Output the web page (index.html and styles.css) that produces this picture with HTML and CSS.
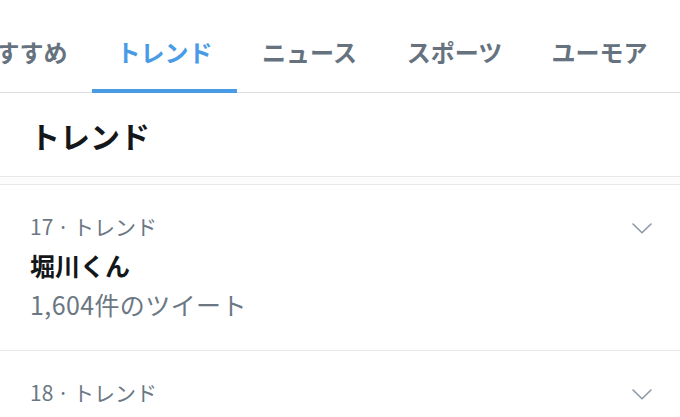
FILE: index.html
```html
<!DOCTYPE html>
<html lang="ja">
<head>
<meta charset="utf-8">
<link rel="stylesheet" href="styles.css">
</head>
<body>
<div class="page">
  <nav class="tabs">
    <div class="tab">おすすめ</div>
    <div class="tab active">トレンド</div>
    <div class="tab">ニュース</div>
    <div class="tab">スポーツ</div>
    <div class="tab">ユーモア</div>
  </nav>
  <h1 class="heading">トレンド</h1>
  <div class="sep"></div>
  <div class="item">
    <div class="meta-row">
      <span class="meta">17<span class="dot">·</span>トレンド</span>
      <svg class="chev" width="20" height="11" viewBox="0 0 20 11"><path d="M1 1 L10 9.8 L19 1" fill="none" stroke="#8b98a5" stroke-width="1.6" stroke-linecap="round" stroke-linejoin="round"/></svg>
    </div>
    <div class="name">堀川くん</div>
    <div class="count">1,604件のツイート</div>
  </div>
  <div class="item">
    <div class="meta-row">
      <span class="meta">18<span class="dot">·</span>トレンド</span>
      <svg class="chev" width="20" height="11" viewBox="0 0 20 11"><path d="M1 1 L10 9.8 L19 1" fill="none" stroke="#8b98a5" stroke-width="1.6" stroke-linecap="round" stroke-linejoin="round"/></svg>
    </div>
  </div>
</div>
</body>
</html>
```
FILE: styles.css
```css
html, body {
  margin: 0;
  padding: 0;
  background: #fff;
}
body {
  font-family: "Noto Sans CJK JP", "Noto Sans", sans-serif;
  overflow: hidden;
}
.page {
  width: 680px;
  height: 417px;
  overflow: hidden;
}
.tabs {
  display: flex;
  height: 93px;
  box-sizing: border-box;
  border-bottom: 1px solid #dcdfe2;
  margin-left: -53px;
  white-space: nowrap;
}
.tab {
  flex: 0 0 145px;
  box-sizing: border-box;
  text-align: center;
  font-size: 24px;
  font-weight: 700;
  color: #66737f;
  line-height: 30px;
  padding-top: 37px;
  height: 93px;
}
.tab.active {
  color: #4a9be6;
  border-bottom: 4px solid #4a9be6;
  height: 93px;
}
.heading {
  margin: 0;
  height: 83px;
  box-sizing: border-box;
  padding: 25px 30px 0;
  font-size: 30px;
  line-height: 34px;
  font-weight: 700;
  color: #14171a;
}
.sep {
  height: 7px;
  border-top: 1px solid #e6e8ea;
  border-bottom: 1px solid #e6e8ea;
  background: #fcfcfc;
}
.item {
  padding: 22px 28px 26px 30px;
  border-bottom: 1px solid #e6e8ea;
}
.meta-row {
  display: flex;
  justify-content: space-between;
  align-items: center;
  height: 39px;
}
.meta {
  font-size: 21px;
  line-height: 39px;
  color: #6b7783;
}
.dot {
  margin: 0 4px;
}
.chev {
  display: block;
  margin-top: 4px;
}
.name {
  font-size: 25px;
  line-height: 39px;
  font-weight: 700;
  color: #14171a;
}
.count {
  font-size: 25px;
  line-height: 39px;
  letter-spacing: 0.4px;
  color: #6b7783;
}
```
